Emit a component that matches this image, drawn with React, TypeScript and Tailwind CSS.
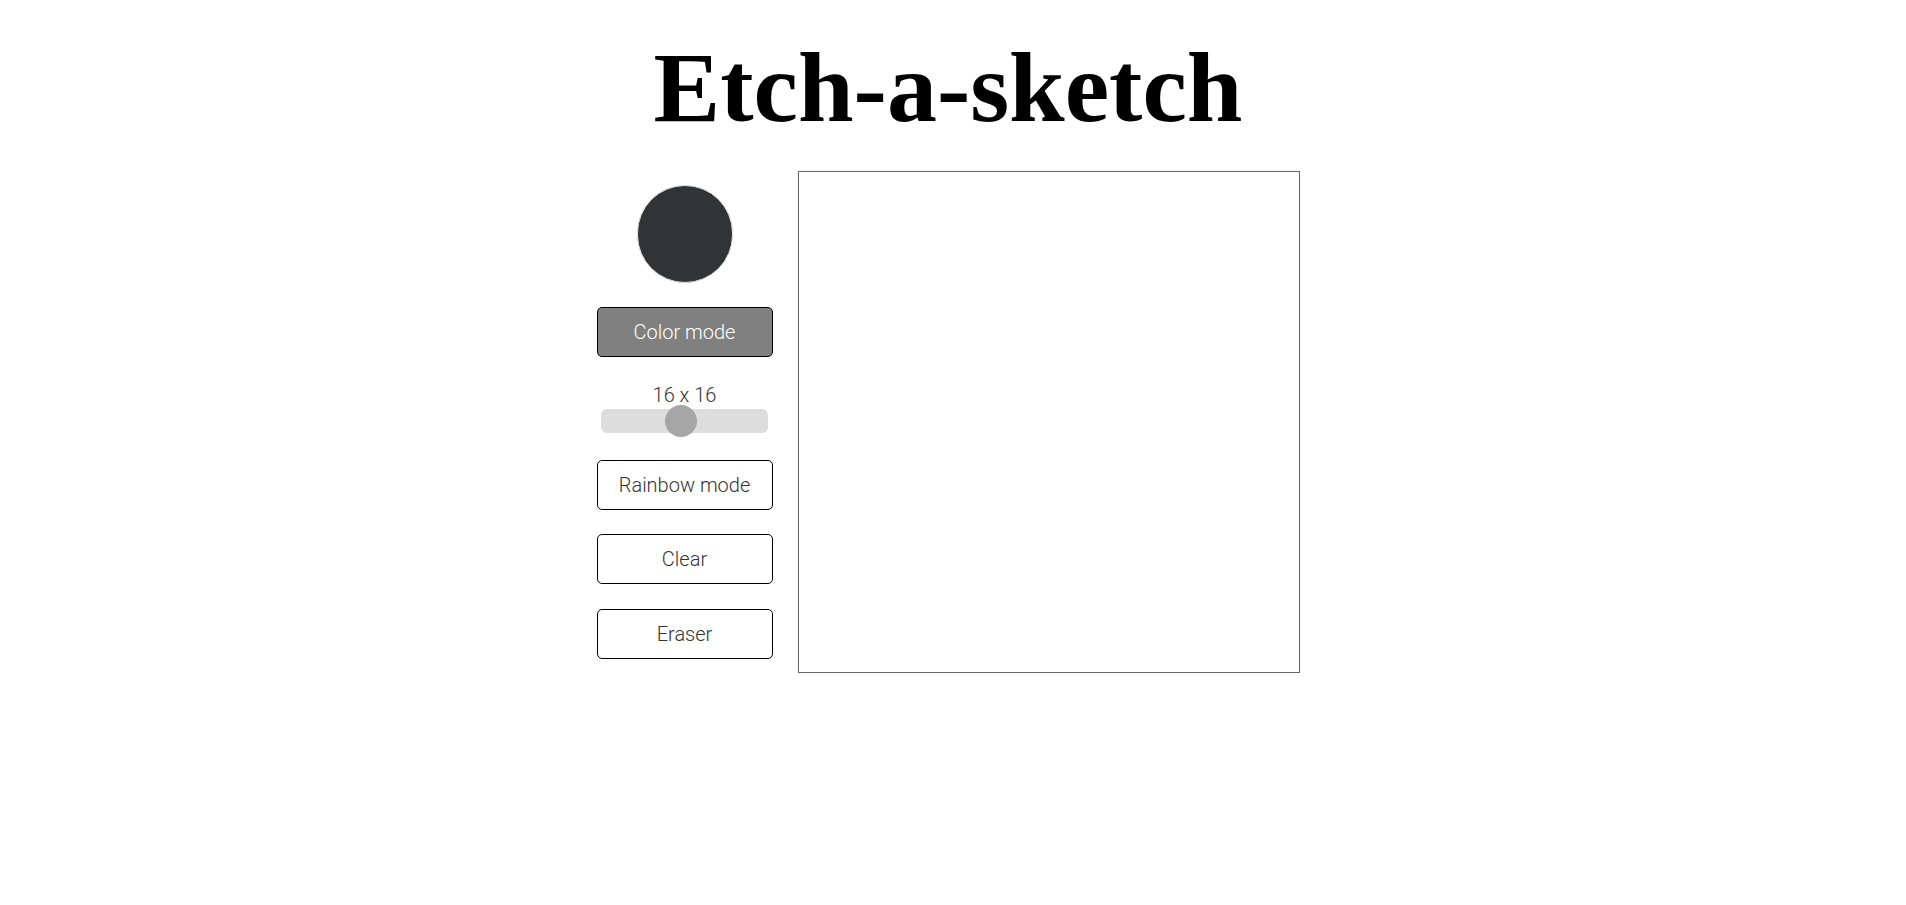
const btn =
  "w-[176px] h-[50px] rounded-[5px] border border-black text-[20px] leading-6 font-light";

export default function App() {
  return (
    <div className="min-h-screen bg-white pr-[10px] font-['Roboto','Liberation_Sans',sans-serif]">
      {/* title */}
      <h1 className="pt-[38px] text-center font-['Liberation_Serif','Times_New_Roman',serif] text-[100px] font-bold leading-none text-black">
        Etch-a-sketch
      </h1>

      <div className="mt-[33px] flex items-center justify-center gap-[25px]">
        {/* controls */}
        <div className="flex w-[176px] flex-col items-center">
          <div className="h-[98px] w-[96px] rounded-full border border-[#e6e6e6] bg-[#303437]" />
          <button className={`${btn} mt-[24px] bg-[#808080] text-white`}>Color mode</button>

          <div className="mt-[26px] text-[20px] leading-6 font-light text-[#333]">16 x 16</div>
          <div className="relative mt-[2px] h-[24px] w-[167px] rounded-[6px] bg-[#dddddd]">
            <div className="absolute left-[64px] top-1/2 h-[32px] w-[32px] -translate-y-1/2 rounded-full bg-[#a6a6a6]" />
          </div>

          <button className={`${btn} mt-[27px] bg-white text-[#333]`}>Rainbow mode</button>
          <button className={`${btn} mt-[24px] bg-white text-[#333]`}>Clear</button>
          <button className={`${btn} mt-[25px] bg-white text-[#333]`}>Eraser</button>
        </div>

        {/* drawing grid */}
        <div className="h-[502px] w-[502px] border border-[#666] bg-white shadow-[0_0_3px_rgba(0,0,0,0.08)]" />
      </div>
    </div>
  );
}
